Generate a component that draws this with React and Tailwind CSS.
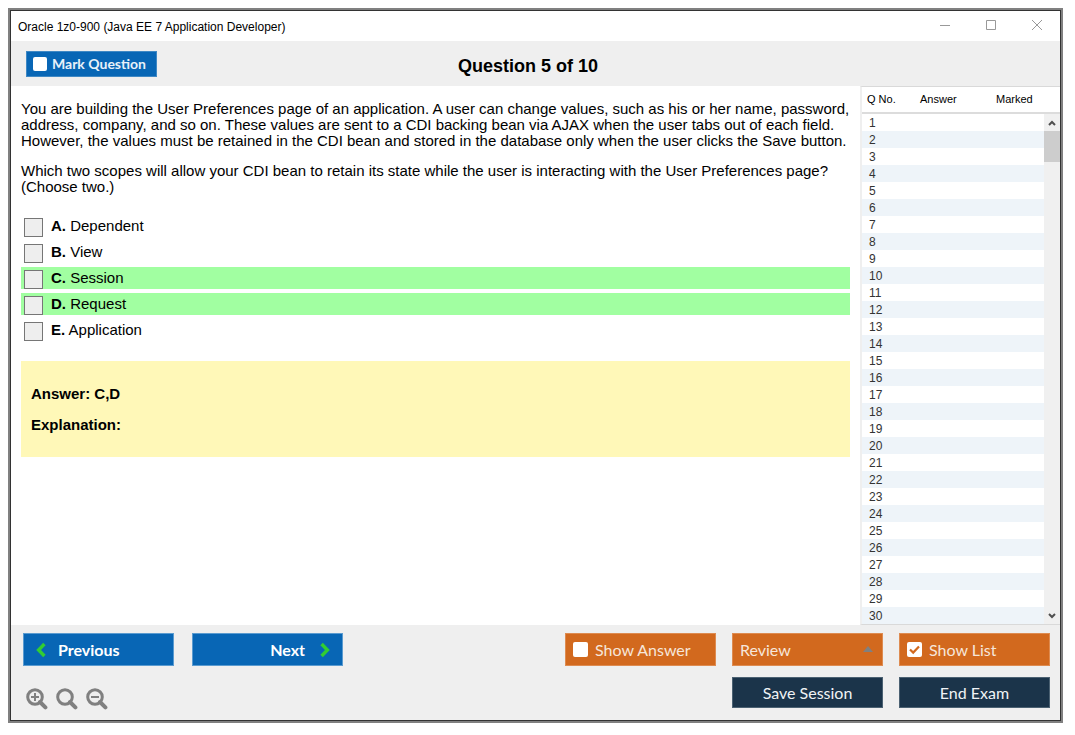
import { useState } from "react";

const OPTIONS = [
  { letter: "A", text: "Dependent" },
  { letter: "B", text: "View" },
  { letter: "C", text: "Session" },
  { letter: "D", text: "Request" },
  { letter: "E", text: "Application" },
];

const CORRECT = ["C", "D"];

const QUESTION_NUMBERS = Array.from({ length: 30 }, (_, i) => i + 1);

const CheckBox = ({ checked, onChange, className }) => (
  <span className={`relative flex ${className}`}>
    <input
      type="checkbox"
      checked={checked}
      onChange={onChange}
      className="size-full appearance-none rounded-xs bg-white"
    />
    {checked && (
      <svg viewBox="0 0 15 15" className="pointer-events-none absolute inset-0 size-full">
        <path d="M3 7.5 6.2 10.6 12 4.6" fill="none" stroke="#d2691e" strokeWidth="2.2" />
      </svg>
    )}
  </span>
);

const Chevron = ({ direction }) => (
  <svg viewBox="0 0 10 16" className="h-4 w-[10px]" fill="none" stroke="#32cd32" strokeWidth="3.4">
    <path d={direction === "left" ? "M8.4 2 2.6 8 8.4 14" : "M1.6 2 7.4 8 1.6 14"} />
  </svg>
);

const ZoomIcon = ({ type }) => (
  <svg viewBox="0 0 22 22" className="size-[22px]" fill="none" stroke="#808080">
    <circle cx="9" cy="9" r="7.3" strokeWidth="3" />
    <path d="M14 14 19.4 19.4" strokeWidth="4" strokeLinecap="round" />
    {type !== "reset" && <path d="M5 9h8" strokeWidth="2" />}
    {type === "in" && <path d="M9 5v8" strokeWidth="2" />}
  </svg>
);

const TitleBar = () => (
  <header className="flex h-[30px] items-center justify-between bg-white pr-[17px] pl-[7px]">
    <span className="pt-px text-[12px]">Oracle 1z0-900 (Java EE 7 Application Developer)</span>
    <div className="flex items-center gap-[34px] pb-[2px]">
      <button aria-label="Minimize">
        <svg viewBox="0 0 12 12" className="size-3" stroke="#999" fill="none">
          <path d="M1 6.5h10" />
        </svg>
      </button>
      <button aria-label="Maximize">
        <svg viewBox="0 0 12 12" className="size-3" stroke="#999" fill="none">
          <path d="M1.5 1.5h9v9h-9z" />
        </svg>
      </button>
      <button aria-label="Close">
        <svg viewBox="0 0 12 12" className="size-3" stroke="#999" fill="none">
          <path d="M1 1l10 10M11 1 1 11" />
        </svg>
      </button>
    </div>
  </header>
);

const QuestionList = () => (
  <aside className="flex w-[200px] shrink-0 border-t border-b border-l-2 border-t-[#d9d9d9] border-b-[#d9d9d9] border-l-[#efefef] bg-white">
    <table className="flex-1 table-fixed border-collapse self-start text-left">
      <thead>
        <tr className="h-[26px] border-b-2 border-[#dcdcdc] text-[11px]">
          <th className="w-[53px] pl-[5px] font-normal">Q No.</th>
          <th className="w-[75px] pl-[5px] font-normal">Answer</th>
          <th className="w-[54px] pl-[6px] font-normal">Marked</th>
        </tr>
      </thead>
      <tbody className="text-[12px] leading-4 text-[#333]">
        {QUESTION_NUMBERS.map((n) => (
          <tr key={n} className="h-[17px] even:bg-[#eef4f9]">
            <td className="pt-px pb-0 pl-[7px]">{n}</td>
            <td />
            <td />
          </tr>
        ))}
      </tbody>
    </table>
    <div className="flex w-4 flex-col">
      <div className="h-[27px] border-b-2 border-[#dcdcdc]" />
      <div className="flex flex-1 flex-col items-center bg-[#f0f0f0]">
        <button aria-label="Scroll up" className="flex h-[17px] items-center">
          <svg viewBox="0 0 8 6" className="w-2" fill="none" stroke="#505050" strokeWidth="2">
            <path d="M1 5 4 2 7 5" />
          </svg>
        </button>
        <div className="h-[31px] w-full bg-[#cdcdcd]" />
        <button aria-label="Scroll down" className="mt-auto flex h-[17px] items-center">
          <svg viewBox="0 0 8 6" className="w-2" fill="none" stroke="#505050" strokeWidth="2">
            <path d="M1 1 4 4 7 1" />
          </svg>
        </button>
      </div>
    </div>
  </aside>
);

const App = () => {
  const [marked, setMarked] = useState(false);
  const [showAnswer, setShowAnswer] = useState(false);
  const [showList, setShowList] = useState(true);

  return (
    <div className="flex min-h-screen bg-white pt-2 pr-3 pb-3 pl-2 font-['Liberation_Sans',Arial,sans-serif] text-black">
      <div className="flex flex-1 border-2 border-[#808080]">
        <div className="flex flex-1 flex-col border border-[#333] bg-[#efefef]">
          <TitleBar />

          <div className="grid h-[45px] grid-cols-[1fr_auto_1fr] items-center pr-[30px] pl-[15px]">
            <label className="flex h-[26px] w-[131px] items-center gap-[5px] border border-[#3f88c4] bg-[#0866b5] pl-[6px] font-['Lato',sans-serif] text-[14px] font-bold text-[#e8f1f9]">
              <CheckBox
                checked={marked}
                onChange={() => setMarked(!marked)}
                className="size-[14px]"
              />
              Mark Question
            </label>
            <h1 className="pt-[5px] text-[18px] font-bold">Question 5 of 10</h1>
          </div>

          <div className="flex flex-1">
            <main className="flex-1 bg-white px-[10px] pt-[15px] text-[15px] leading-4">
              <p>
                You are building the User Preferences page of an application. A user can change
                values, such as his or her name, password, address, company, and so on. These
                values are sent to a CDI backing bean via AJAX when the user tabs out of each
                field. However, the values must be retained in the CDI bean and stored in the
                database only when the user clicks the Save button.
              </p>
              <p className="mt-[14px]">
                Which two scopes will allow your CDI bean to retain its state while the user is
                interacting with the User Preferences page? (Choose two.)
              </p>

              <div className="mt-5 flex flex-col gap-1">
                {OPTIONS.map((option) => (
                  <label
                    key={option.letter}
                    className={`flex h-[22px] items-end gap-2 pl-[3px] ${
                      CORRECT.includes(option.letter) ? "bg-[#a1ffa1]" : ""
                    }`}
                  >
                    <input
                      type="checkbox"
                      className="size-[19px] appearance-none border border-[#767676] bg-[#eee] checked:bg-[#767676]"
                    />
                    <span className="self-center">
                      <b>{option.letter}.</b> {option.text}
                    </span>
                  </label>
                ))}
              </div>

              <div className="mt-5 bg-[#fff8b8] px-[10px] pt-[25px] pb-6 font-bold">
                <p>Answer: C,D</p>
                <p className="mt-[15px]">Explanation:</p>
              </div>
            </main>
            {showList && <QuestionList />}
          </div>

          <footer className="flex h-[95px] justify-between pt-2 pr-[10px] pl-3 font-['Lato',sans-serif] text-[16px]">
            <div className="flex flex-col">
              <div className="flex gap-[18px] font-bold text-white">
                <button className="flex h-[33px] w-[151px] items-center gap-3 border border-[#5a9bd0] bg-[#0866b5] pl-3">
                  <Chevron direction="left" />
                  Previous
                </button>
                <button className="flex h-[33px] w-[151px] items-center justify-end gap-[15px] border border-[#5a9bd0] bg-[#0866b5] pr-3">
                  Next
                  <Chevron direction="right" />
                </button>
              </div>
              <div className="mt-[22px] flex gap-2 pl-[3px]">
                <button aria-label="Zoom in">
                  <ZoomIcon type="in" />
                </button>
                <button aria-label="Reset zoom">
                  <ZoomIcon type="reset" />
                </button>
                <button aria-label="Zoom out">
                  <ZoomIcon type="out" />
                </button>
              </div>
            </div>

            <div className="grid grid-cols-[151px_151px_151px] content-start gap-x-4 gap-y-[11px] text-[#f6e6da]">
              <label className="flex h-[33px] items-center gap-[7px] border border-[#de8b50] bg-[#d2691e] pl-[7px]">
                <CheckBox
                  checked={showAnswer}
                  onChange={() => setShowAnswer(!showAnswer)}
                  className="size-[15px]"
                />
                Show Answer
              </label>
              <div className="relative">
                <select
                  aria-label="Review"
                  className="h-[33px] w-full appearance-none border border-[#de8b50] bg-[#d2691e] pl-[7px]"
                >
                  <option>Review</option>
                </select>
                <svg
                  viewBox="0 0 10 6"
                  className="pointer-events-none absolute top-[13px] right-[10px] w-[10px]"
                >
                  <path d="M0 6 5 0 10 6z" fill="#808080" />
                </svg>
              </div>
              <label className="flex h-[33px] items-center gap-[7px] border border-[#de8b50] bg-[#d2691e] pl-[7px]">
                <CheckBox
                  checked={showList}
                  onChange={() => setShowList(!showList)}
                  className="size-[15px]"
                />
                Show List
              </label>
              <button className="col-start-2 h-[31px] border border-[#4b6172] bg-[#1b344a] text-[#f0f3f5]">
                Save Session
              </button>
              <button className="h-[31px] border border-[#4b6172] bg-[#1b344a] text-[#f0f3f5]">
                End Exam
              </button>
            </div>
          </footer>
        </div>
      </div>
    </div>
  );
};

export default App;
